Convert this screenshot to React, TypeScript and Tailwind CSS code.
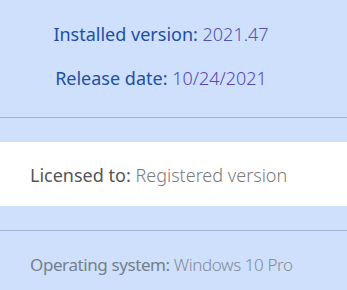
export default function App() {
  const font = { fontFamily: '"Noto Sans", "Segoe UI", sans-serif' };
  return (
    <div className="w-[347px] h-[290px] overflow-hidden bg-[#cee0fc]" style={font}>
      <div className="h-[117px] flex flex-col items-center pr-[25px] pt-[23px] gap-[22px] text-[18px] leading-[22px]">
        <div>
          <span className="text-[#1f4ea3]">Installed version: </span>
          <span className="text-[#5452b4] font-light">2021.47</span>
        </div>
        <div>
          <span className="text-[#1f4ea3]">Release date: </span>
          <span className="text-[#5a47b4] font-light">10/24/2021</span>
        </div>
      </div>
      <div className="h-px bg-[#9fb4da]" />
      <div className="h-[24px]" />
      <div className="h-[64px] bg-white flex items-center pl-[30px] pt-[2px] text-[18px] leading-[22px]">
        <span className="text-[#555555]">Licensed to:&nbsp;</span>
        <span className="text-[#7a7a7a] font-light">Registered version</span>
      </div>
      <div className="h-[24px]" />
      <div className="h-px bg-[#9fb4da]" />
      <div className="pl-[30px] pt-[23px] text-[17px] leading-[22px] tracking-[-0.4px]">
        <span className="text-[#767f8c]">Operating system:&nbsp;</span>
        <span className="text-[#858c98] font-light">Windows 10 Pro</span>
      </div>
    </div>
  );
}
